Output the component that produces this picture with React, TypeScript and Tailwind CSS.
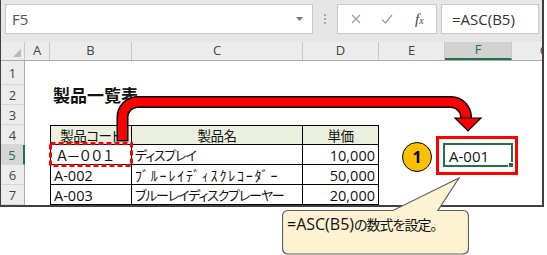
import clsx from 'clsx'
import type { ReactNode } from 'react'

const UI = "font-['Open_Sans','Noto_Sans',sans-serif]"
const JP = "font-['Open_Sans','Noto_Sans_CJK_JP',sans-serif] [font-feature-settings:'palt']"

const COLUMNS = [
  { id: 'A', w: 'w-[25px]' },
  { id: 'B', w: 'w-[82px]' },
  { id: 'C', w: 'w-[171px]' },
  { id: 'D', w: 'w-[76px]' },
  { id: 'E', w: 'w-[66px]' },
  { id: 'F', w: 'w-[67px]', sel: true },
  { id: 'G', w: 'w-[66px]' },
]

function FormulaBar() {
  return (
    <div className={clsx('flex h-[42px] shrink-0 items-start pl-[4px] pt-[4px]', UI)}>
      <div className="flex h-[30px] w-[308px] shrink-0 items-center justify-between border border-[#c8c8c8] bg-white pl-[6px] pr-[9px]">
        <span className="text-[15px] text-[#555]">F5</span>
        <svg width="7" height="4" viewBox="0 0 7 4">
          <path d="M0 0h7L3.5 4z" fill="#777" />
        </svg>
      </div>
      <div className="flex h-[30px] w-[24px] shrink-0 flex-col items-center justify-center gap-[2px]">
        <span className="h-[2px] w-[2px] bg-[#a8a8a8]" />
        <span className="h-[2px] w-[2px] bg-[#a8a8a8]" />
        <span className="h-[2px] w-[2px] bg-[#a8a8a8]" />
      </div>
      <div className="flex h-[30px] w-[100px] shrink-0 items-center border border-[#c8c8c8] bg-white pl-[13px]">
        <svg width="10" height="10" viewBox="0 0 10 10">
          <path d="M1 1l8 8M9 1l-8 8" stroke="#9a9a9a" strokeWidth="1.2" fill="none" />
        </svg>
        <svg className="ml-[20px]" width="12" height="10" viewBox="0 0 12 10">
          <path d="M1 5.5l3.5 3.5L11 1" stroke="#9a9a9a" strokeWidth="1.2" fill="none" />
        </svg>
        <span className="ml-[22px] font-['Liberation_Serif',serif] text-[15px] italic text-[#444]">
          f<span className="text-[10px]">x</span>
        </span>
      </div>
      <div className="ml-[4px] flex h-[30px] w-[98px] shrink-0 items-center border border-[#c8c8c8] bg-white pl-[10px] text-[15px] text-[#333]">
        =ASC(B5)
      </div>
    </div>
  )
}

function ColumnHeaders() {
  return (
    <div className={clsx('flex h-[19px] shrink-0 border-b border-[#ababab] bg-[#ececec]', UI)}>
      <div className="relative w-[24px] shrink-0 border-r border-[#c8c8c8]">
        <svg className="absolute right-[3px] bottom-[3px]" width="8" height="8" viewBox="0 0 8 8">
          <path d="M8 0V8H0z" fill="#b9b9b9" />
        </svg>
      </div>
      {COLUMNS.map((c) => (
        <div
          key={c.id}
          className={clsx(
            'flex shrink-0 items-center justify-center border-r border-[#c8c8c8] text-[13px]',
            c.w,
            c.sel ? 'border-b-2 border-b-[#217346] bg-[#d2d2d2] text-[#217346]' : 'text-[#444]',
          )}
        >
          {c.id}
        </div>
      ))}
    </div>
  )
}

function SheetRow({ n, h, sel, children }: { n: number | string; h: string; sel?: boolean; children?: ReactNode }) {
  return (
    <div className={clsx('flex shrink-0', h)}>
      <div
        className={clsx(
          'flex w-[24px] shrink-0 items-center justify-center border-b border-r border-b-[#d6d6d6] pt-[3px] text-[13px]',
          UI,
          sel ? 'border-r-2 border-r-[#217346] bg-[#d6d6d6] text-[#217346]' : 'border-r-[#ababab] bg-[#ececec] text-[#444]',
        )}
      >
        {n}
      </div>
      <div className={clsx('flex flex-1 bg-white text-[14px] text-[#111]', JP)}>{children}</div>
    </div>
  )
}

function Cell({ w, className, children }: { w: string; className?: string; children?: ReactNode }) {
  return <div className={clsx('flex shrink-0 items-center whitespace-nowrap pt-[2px]', w, className)}>{children}</div>
}

const HEAD = 'justify-center border-y border-r border-black bg-[#ebf0de] text-[13.5px] tracking-[-0.5px]'
const BODY = 'border-b border-r border-black'
const KANA = 'pl-[3px] text-[13px] tracking-[-1.2px]'
const NUM = 'justify-end pr-[3px] text-[14.5px]'

export default function App() {
  return (
    <div className="relative h-[255px] w-[547px] overflow-hidden bg-white">
      <div className="flex h-[207px] w-[544px] flex-col overflow-hidden border-b-2 border-l border-r-2 border-[#404040] bg-[#e6e6e6]">
        <FormulaBar />
        <ColumnHeaders />
        <SheetRow n={1} h="h-[24px]" />
        <SheetRow n={2} h="h-[20px]">
          <Cell w="w-[25px]" />
          <Cell w="w-[82px]" className="pl-[3px] text-[17px] font-bold">
            製品一覧表
          </Cell>
        </SheetRow>
        <SheetRow n={3} h="h-[20px]" />
        <SheetRow n={4} h="h-[20px]">
          <Cell w="w-[25px]" />
          <Cell w="w-[82px]" className={clsx(HEAD, 'border-l')}>
            製品コード
          </Cell>
          <Cell w="w-[171px]" className={HEAD}>
            製品名
          </Cell>
          <Cell w="w-[76px]" className={HEAD}>
            単価
          </Cell>
        </SheetRow>
        <SheetRow n={5} h="h-[20px]" sel>
          <Cell w="w-[25px]" />
          <Cell
            w="w-[82px]"
            className={clsx(BODY, 'border-l pl-[4px] text-[14px] tracking-[-2.4px] [font-feature-settings:normal]')}
          >
            Ａ－００１
          </Cell>
          <Cell w="w-[171px]" className={clsx(BODY, KANA)}>
            ディスプレイ
          </Cell>
          <Cell w="w-[76px]" className={clsx(BODY, NUM)}>
            10,000
          </Cell>
          <Cell w="w-[66px]" />
          <Cell w="w-[67px]" className="pl-[4px] text-[15px]">
            A-001
          </Cell>
        </SheetRow>
        <SheetRow n={6} h="h-[20px]">
          <Cell w="w-[25px]" />
          <Cell w="w-[82px]" className={clsx(BODY, 'border-l pl-[3px] text-[14.5px]')}>
            A-002
          </Cell>
          <Cell w="w-[171px]" className={clsx(BODY, 'pl-[3px] tracking-[1.8px]')}>
            ﾌﾞﾙｰﾚｲﾃﾞｨｽｸﾚｺｰﾀﾞｰ
          </Cell>
          <Cell w="w-[76px]" className={clsx(BODY, NUM)}>
            50,000
          </Cell>
        </SheetRow>
        <SheetRow n={7} h="h-[20px]">
          <Cell w="w-[25px]" />
          <Cell w="w-[82px]" className={clsx(BODY, 'border-l pl-[3px] text-[14.5px]')}>
            A-003
          </Cell>
          <Cell w="w-[171px]" className={clsx(BODY, KANA)}>
            ブルーレイディスクプレーヤー
          </Cell>
          <Cell w="w-[76px]" className={clsx(BODY, NUM)}>
            20,000
          </Cell>
        </SheetRow>
      </div>

      {/* red dotted frame on B5 */}
      <svg className="pointer-events-none absolute left-[49px] top-[142px]" width="84" height="25" viewBox="0 0 84 25">
        <rect x="1.5" y="1.5" width="81" height="22" fill="none" stroke="#ff0000" strokeWidth="3" strokeDasharray="5 3" />
      </svg>

      {/* F5 selection + highlight */}
      <div className="pointer-events-none absolute left-[443px] top-[143px] h-[24px] w-[70px] border-2 border-[#217346]">
        <span className="absolute -bottom-[3px] -right-[3px] h-[6px] w-[6px] border border-white bg-[#217346]" />
      </div>
      <div className="pointer-events-none absolute left-[436px] top-[136px] h-[39px] w-[82px] border-[3px] border-[#ff0000]" />

      {/* step badge */}
      <div
        className={clsx(
          'absolute left-[402px] top-[142px] flex h-[30px] w-[30px] items-center justify-center rounded-full border border-black bg-[#ffc000] text-[16px] font-bold text-black',
          UI,
        )}
      >
        1
      </div>

      {/* arrow B5 -> F5 */}
      <svg className="pointer-events-none absolute left-0 top-0" width="547" height="255" viewBox="0 0 547 255">
        <path d="M122.5 141.5V117A15 15 0 0 1 137.5 102H451A15 15 0 0 1 466 117V121" fill="none" stroke="#000" strokeWidth="12" />
        <path d="M122.5 140V117A15 15 0 0 1 137.5 102H451A15 15 0 0 1 466 117V121" fill="none" stroke="#ff0000" strokeWidth="9" />
        <path d="M455 118H481L468 131Z" fill="#ff0000" stroke="#000" strokeWidth="1.2" strokeLinejoin="miter" />
      </svg>

      {/* callout */}
      <div className="absolute left-[282px] top-[176px] h-[79px] w-[187px]">
        <svg className="absolute inset-0" width="187" height="79" viewBox="0 0 187 79">
          <path
            d="M6.5 34.5H111L177 2L156 34.5H180.5Q186.5 34.5 186.5 40.5V72Q186.5 78 180.5 78H6.5Q0.5 78 0.5 72V40.5Q0.5 34.5 6.5 34.5Z"
            fill="#fdf2d2"
            stroke="#5f5f5f"
            strokeWidth="1.2"
          />
        </svg>
        <div className={clsx('relative pl-[5px] pt-[37px] text-[16px] leading-[22px] text-[#111]', JP)}>
          =ASC(B5)<span className="text-[14px] tracking-[-1px]">の数式を設定。</span>
        </div>
      </div>
    </div>
  )
}
